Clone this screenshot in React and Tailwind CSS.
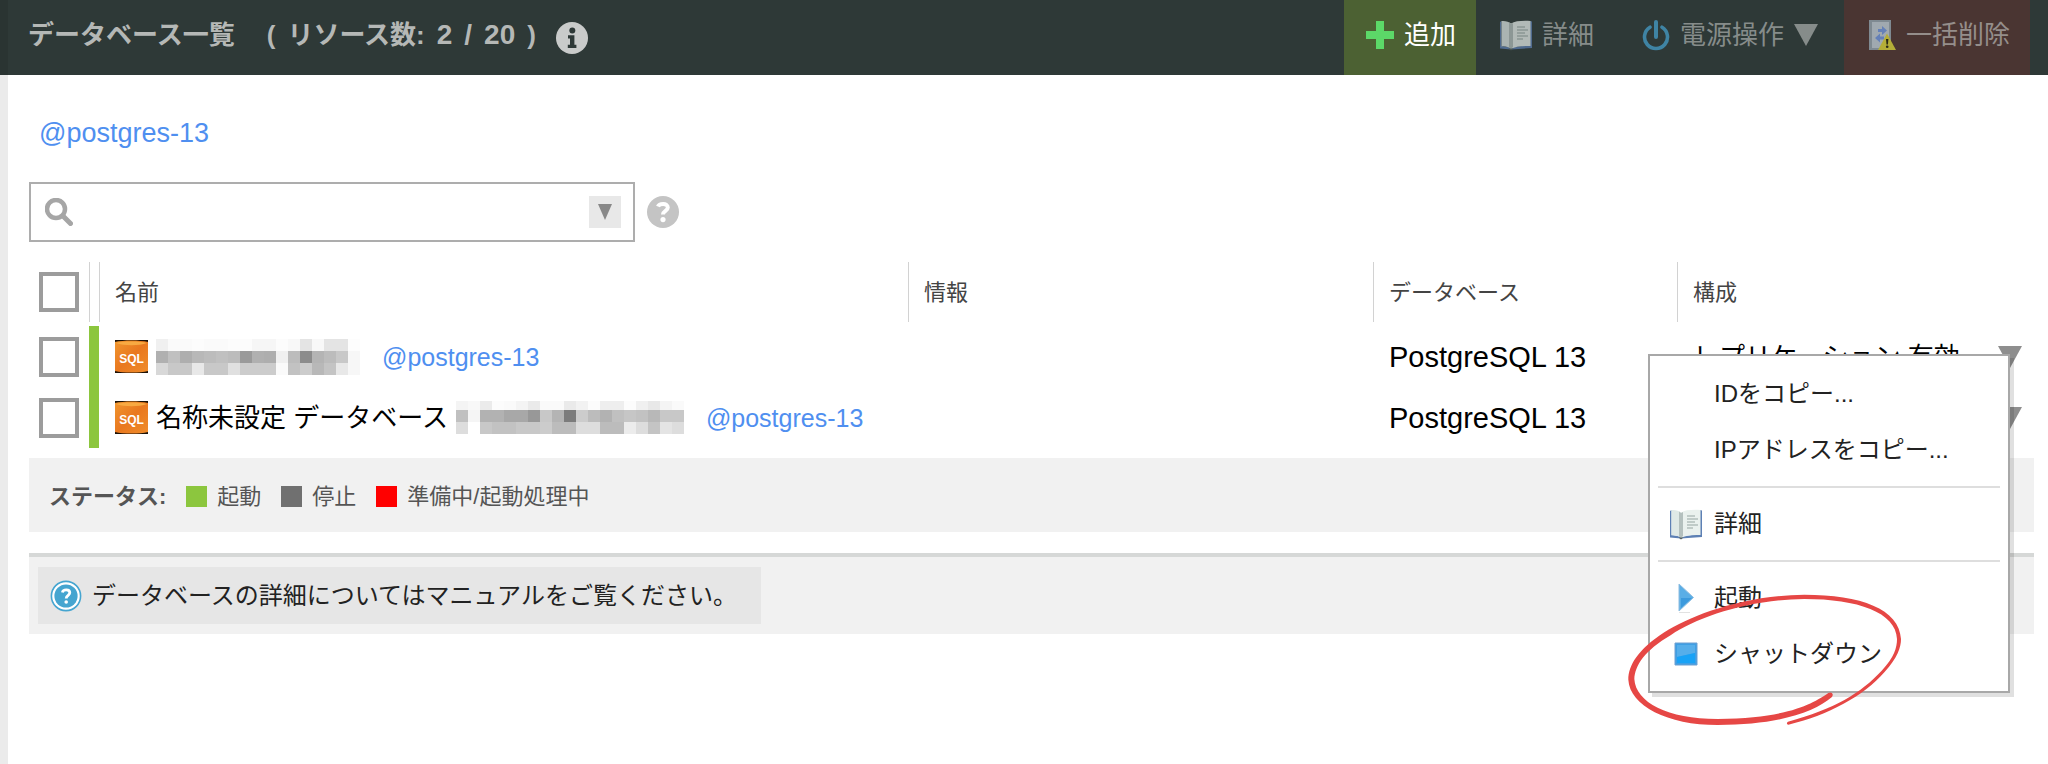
import React, { useState } from "react";

const databases = [
  {
    id: 1,
    name: "",
    mask: {
      top: 12,
      rows: [
        ["f0", "fa", "fa", "fc", "fa", "fa", "fc", "fc", "f6", "f6", "fc", "f8", "e4", "f8", "e4", "e4", "fd"],
        ["b0", "c0", "ae", "b8", "bc", "c0", "bc", "9a", "b0", "ae", "f0", "bc", "8c", "b4", "bc", "c8", "f7"],
        ["d8", "c8", "c8", "e8", "c8", "c8", "e0", "cc", "cc", "cc", "fa", "c2", "cc", "b8", "c4", "e8", "f7"],
      ],
    },
    tag: "@postgres-13",
    database: "PostgreSQL 13",
    config: "レプリケーション 有効",
  },
  {
    id: 2,
    name: "名称未設定 データベース",
    mask: {
      top: 9,
      rows: [
        ["f4", "f8", "eb", "fc", "fa", "f4", "ea", "fa", "fa", "ea", "f2", "fc", "ee", "ee", "fc", "f0", "e8", "f4", "fa"],
        ["c0", "f5", "b2", "b2", "a8", "a8", "98", "c8", "b4", "7c", "cc", "bc", "b2", "c0", "c6", "c2", "b8", "c8", "c8"],
        ["dd", "ff", "c8", "c2", "c2", "c8", "c8", "cc", "bc", "bc", "dd", "dd", "bc", "bc", "ec", "dd", "c4", "e4", "dd"],
      ],
    },
    tag: "@postgres-13",
    database: "PostgreSQL 13",
    config: "レプリケーション 有効",
  },
];

const statuses = [
  { label: "起動", color: "bg-[#8cc63e]" },
  { label: "停止", color: "bg-[#707070]" },
  { label: "準備中/起動処理中", color: "bg-[#ff0000]" },
];

const InfoIcon = () => (
  <svg className="size-8" viewBox="0 0 32 32" aria-hidden="true">
    <circle cx="16" cy="16" r="16" fill="#c9cbca" />
    <circle cx="16.3" cy="8.6" r="3" fill="#2e3937" />
    <path d="M12 13.2h6.4v9.6h2v3.2h-8.6v-3.2h2.2v-6.4h-2z" fill="#2e3937" />
  </svg>
);

const QuestionIcon = () => (
  <svg className="size-8" viewBox="0 0 32 32" aria-hidden="true">
    <circle cx="16" cy="16" r="16" fill="#c4c4c4" />
    <path d="M11 10.5C12 7.6 20.8 6.4 20.8 11.6C20.8 15 16 14.8 16 18.6" fill="none" stroke="#fff" strokeWidth="4" />
    <circle cx="16" cy="23.6" r="2.6" fill="#fff" />
  </svg>
);

const ManualIcon = () => (
  <svg className="size-8" viewBox="0 0 32 32" aria-hidden="true">
    <circle cx="16" cy="16" r="14.6" fill="#fff" stroke="#45a5d0" strokeWidth="1.6" />
    <circle cx="16" cy="16" r="11.6" fill="#45a5d0" />
    <path d="M12.4 12.4C13 9.2 19.8 8.8 19.8 12.8C19.8 15.4 16.2 15.2 16.2 18.4" fill="none" stroke="#fff" strokeWidth="2.8" />
    <circle cx="16.2" cy="22" r="1.8" fill="#fff" />
  </svg>
);

const PlusIcon = () => (
  <svg className="size-7" viewBox="0 0 28 28" aria-hidden="true">
    <path d="M10 0h8v10h10v8H18v10h-8V18H0v-8h10z" fill="#5cd868" />
  </svg>
);

const BookIcon = () => (
  <svg className="size-8" viewBox="0 0 32 32" aria-hidden="true">
    <path d="M0 3L1.5 2v25l9 1.6L30 26V2l2 .6V29l-21 1.6L0 29.4z" fill="#5d80b4" />
    <path d="M1.5 2C5 1.6 9 2.5 11 4.5V30C8.5 27.8 5 27 1.5 27.4z" fill="#dfe9e6" />
    <path d="M11 4.5C15 2 22 1.6 30.5 2v25C22 26.6 15 27.4 11 30z" fill="#eaf1ee" />
    <path d="M9 3.5L11 5v25l-2-1.4zM11 5l2-1V28l-2 2z" fill="#b4c0be" />
    <path d="M8.5 29.5h5L11 31.5z" fill="#54605f" />
    <path d="M17 8h8M17 11h11M17 14h8M17 17h11M17 20h6" stroke="#b3bebc" strokeWidth="1.4" />
  </svg>
);

const PowerIcon = () => (
  <svg className="h-8 w-7" viewBox="0 0 28 32" aria-hidden="true">
    <path d="M8 8.2A11.5 11.5 0 1 0 20 8.2" fill="none" stroke="#3f84a4" strokeWidth="3.6" strokeLinecap="round" />
    <path d="M14 3v15" stroke="#3f84a4" strokeWidth="4" strokeLinecap="round" />
  </svg>
);

const ServerWarningIcon = () => (
  <svg className="h-8 w-7" viewBox="0 0 28 32" aria-hidden="true">
    <path d="M1 1h22v30H1z" fill="#7f8a92" />
    <path d="M4 3h17v26H4z" fill="#a0a9b0" />
    <path d="M10 10h4V7l5 4.5-5 4.5v-3h-4z" fill="#6480b8" />
    <path d="M16 17.5h-4v-3L7 19l5 4.5v-3h4z" fill="#6480b8" />
    <path d="M19 14.5L28 31H10z" fill="#b4ae38" />
    <path d="M18 20h2.4l-.5 5.5h-1.4z" fill="#2b2a18" />
    <circle cx="19.2" cy="27.8" r="1.3" fill="#2b2a18" />
  </svg>
);

const SearchIcon = () => (
  <svg className="size-7" viewBox="0 0 28 28" aria-hidden="true">
    <circle cx="11" cy="11" r="9" fill="none" stroke="#a6a6a6" strokeWidth="4.5" />
    <path d="M18.5 18.5L25.5 25.5" stroke="#a6a6a6" strokeWidth="5" strokeLinecap="round" />
  </svg>
);

const TriangleDown = ({ className }) => (
  <svg className={className} viewBox="0 0 24 22" preserveAspectRatio="none" aria-hidden="true">
    <path d="M0 0h24L12 22z" fill="currentColor" />
  </svg>
);

const SqlIcon = () => (
  <svg className="size-[33px] shrink-0" viewBox="0 0 33 33" aria-hidden="true">
    <defs>
      <linearGradient id="sql" x1="0" x2="1" y1="0" y2="1">
        <stop offset="0" stopColor="#f0962f" />
        <stop offset="0.5" stopColor="#e9781f" />
        <stop offset="1" stopColor="#f08d2b" />
      </linearGradient>
    </defs>
    <path d="M0 0h33v33H0z" fill="#1c1208" />
    <path d="M0 2C8 0 25 0 33 2v29c-8 2-25 2-33 0z" fill="url(#sql)" />
    <path d="M1 3C9 6 24 6 32 3C25 1 8 1 1 3z" fill="#f8aa42" />
    <text x="16.5" y="23" textAnchor="middle" fontSize="12" fontWeight="700" fill="#fff">SQL</text>
  </svg>
);

const PlayIcon = () => (
  <svg className="h-8 w-4" viewBox="0 0 16 32" aria-hidden="true">
    <path d="M1 2L15.5 15.5L1 29z" fill="#5aaee6" stroke="#8fbde0" />
    <path d="M3 16h11L3 26z" fill="#3c9add" />
    <path d="M1 30.5h11" stroke="#e2e2e2" />
  </svg>
);

const StopIcon = () => (
  <svg className="size-6" viewBox="0 0 24 24" aria-hidden="true">
    <path d="M1 1h22v22H1z" fill="#3f9fe4" />
    <path d="M3 3h18v8L3 15z" fill="#56aeea" />
    <path d="M3 15L21 11v10H3z" fill="#18a2f6" />
    <path d="M1 1h22v22H1z" fill="none" stroke="#6f9fd0" />
  </svg>
);

// Hides part of a resource name behind grey blocks
const Mosaic = ({ mask }) => {
  const width = mask.rows[0].length * 12;
  const height = mask.top + 24;
  return (
    <svg width={width} height={height} shapeRendering="crispEdges" aria-hidden="true">
      {mask.rows.map((row, y) =>
        row.map((c, x) => (
          <rect
            key={`${x}-${y}`}
            x={x * 12}
            y={y === 0 ? 0 : mask.top + (y - 1) * 12}
            width="12"
            height={y === 0 ? mask.top : 12}
            fill={`#${c}${c}${c}`}
          />
        ))
      )}
    </svg>
  );
};

const Checkbox = ({ label, checked, onChange }) => (
  <input
    type="checkbox"
    aria-label={label}
    checked={checked}
    onChange={onChange}
    className="block size-10 ml-2.5 appearance-none border-4 border-[#9c9c9c] bg-white checked:bg-[#9c9c9c]"
  />
);

const MenuItem = ({ icon, children }) => (
  <button role="menuitem" className="flex h-14 w-full items-center gap-3 pl-5 text-left hover:bg-gray-100">
    <span className="flex w-8 justify-center">{icon}</span>
    {children}
  </button>
);

const Separator = () => <hr className="mx-2 my-2 h-[2px] border-0 bg-[#dedede]" />;

const ContextMenu = () => (
  <div
    role="menu"
    className="absolute top-7 right-6 z-10 w-[362px] border-2 border-[#a8a8a8] bg-white pt-2.5 pb-[9px] text-2xl text-[#222] shadow-[4px_4px_0_#0000001f]"
  >
    <MenuItem>IDをコピー...</MenuItem>
    <MenuItem>IPアドレスをコピー...</MenuItem>
    <Separator />
    <MenuItem icon={<BookIcon />}>詳細</MenuItem>
    <Separator />
    <MenuItem icon={<PlayIcon />}>起動</MenuItem>
    <MenuItem icon={<StopIcon />}>シャットダウン</MenuItem>

    {/* Hand drawn marker round the shutdown item */}
    <svg
      className="pointer-events-none absolute -bottom-9 -left-6 h-[136px] w-[280px]"
      viewBox="75 456 840 408"
      aria-hidden="true"
    >
      <path
        d="M562 857C680 830 790 770 850 700C890 655 900 625 900 600C895 510 780 467 610 467C420 470 270 530 190 580C110 632 82 680 82 722C86 800 200 858 350 858C530 858 640 820 692 775C700 766 692 756 682 762C640 790 570 838 350 840C200 840 104 790 100 720C102 680 130 635 210 588C290 535 440 482 610 480C770 480 885 520 888 600C888 625 880 655 842 695C780 762 700 810 561 848C556 851 557 856 562 857Z"
        fill="#e64745"
      />
    </svg>
  </div>
);

const App = () => {
  const [selected, setSelected] = useState([]);
  const [query, setQuery] = useState("");

  const allSelected = selected.length === databases.length;

  const toggle = (id) => {
    setSelected(selected.includes(id) ? selected.filter((s) => s !== id) : [...selected, id]);
  };

  const toggleAll = () => {
    setSelected(allSelected ? [] : databases.map((d) => d.id));
  };

  return (
    <div className="flex min-h-screen flex-col bg-white font-['Liberation_Sans','Noto_Sans_CJK_JP',sans-serif] text-black">
      <header className="flex h-[75px] items-stretch justify-between border-l-8 border-[#2a3432] bg-[#2e3937] pr-[18px] text-[26px] leading-8 text-[#868c8a]">
        <div className="flex items-center gap-5 pl-5 text-[#b5b8b6]">
          <h1 className="flex gap-8 pb-1.5 font-bold">
            データベース一覧
            <span className="flex gap-3">
              <span>(</span>
              <span>リソース数:</span>
              <span className="text-[28px]">2</span>
              <span className="text-[28px]">/</span>
              <span className="text-[28px]">20</span>
              <span>)</span>
            </span>
          </h1>
          <button aria-label="情報">
            <InfoIcon />
          </button>
        </div>

        {/* Toolbar */}
        <div className="flex items-stretch">
          <button className="flex items-center gap-2.5 bg-[#4c6133] pr-5 pb-1.5 pl-[22px] text-white">
            <PlusIcon /> 追加
          </button>
          <button className="flex items-center gap-2.5 px-6 pb-1.5">
            <span className="opacity-70"><BookIcon /></span> 詳細
          </button>
          <button className="flex items-center gap-2.5 pr-[26px] pb-1.5 pl-6">
            <PowerIcon /> 電源操作
            <TriangleDown className="h-[22px] w-6" />
          </button>
          <button className="flex items-center gap-2.5 bg-[#4a3532] pr-5 pb-1.5 pl-6 text-[#958e8b]">
            <ServerWarningIcon /> 一括削除
          </button>
        </div>
      </header>

      <main className="grow border-l-8 border-[#ebebeb] pr-3.5 pl-[21px]">
        <p className="pt-10 pl-2.5 text-[27px] leading-9">
          <a href="#postgres-13" className="text-[#4f8ff0]">@postgres-13</a>
        </p>

        {/* Search */}
        <div className="mt-[31px] flex items-center gap-3">
          <div className="flex h-[60px] w-[606px] items-center gap-3 border-2 border-[#adadad] pr-3 pl-3.5">
            <SearchIcon />
            <input
              type="text"
              aria-label="検索"
              value={query}
              onChange={(e) => setQuery(e.target.value)}
              className="h-10 min-w-0 grow text-2xl outline-none"
            />
            <button aria-label="検索条件" className="flex size-8 items-center justify-center bg-[#e8e8e8] text-[#888]">
              <TriangleDown className="h-4 w-3.5" />
            </button>
          </div>
          <button aria-label="ヘルプ">
            <QuestionIcon />
          </button>
        </div>

        <table className="mt-5 w-full table-fixed border-collapse text-left">
          <colgroup>
            <col className="w-[60px]" />
            <col className="w-2.5" />
            <col />
            <col className="w-[465px]" />
            <col className="w-[304px]" />
            <col className="w-[357px]" />
          </colgroup>
          <thead className="text-[22px] text-[#444]">
            <tr className="h-16">
              <th className="p-0 pb-1">
                <Checkbox label="すべて選択" checked={allSelected} onChange={toggleAll} />
              </th>
              <th className="p-0 pb-1">
                <div className="h-[60px] border-l border-[#d2d2d2]" />
              </th>
              {["名前", "情報", "データベース", "構成"].map((label) => (
                <th key={label} scope="col" className="p-0 pb-1 font-normal">
                  <div className="flex h-[60px] items-center border-l border-[#d2d2d2] pl-[15px]">{label}</div>
                </th>
              ))}
            </tr>
          </thead>
          <tbody className="text-[26px] leading-9 whitespace-nowrap">
            {databases.map((db, i) => (
              <tr key={db.id} className="h-[61px]">
                <td className="p-0">
                  <Checkbox label={`選択 ${db.id}`} checked={selected.includes(db.id)} onChange={() => toggle(db.id)} />
                </td>
                <td className="bg-[#8cc63e] p-0" />
                <td className="p-0 pl-4">
                  <div className="flex items-center gap-2">
                    <SqlIcon />
                    {db.name && <span>{db.name}</span>}
                    <Mosaic mask={db.mask} />
                    <a href="#postgres-13" className="ml-3.5 text-[25px] text-[#4f8ff0]">{db.tag}</a>
                  </div>
                </td>
                <td className="p-0 pl-4" />
                <td className="p-0 pl-4 text-[29px]">{db.database}</td>
                <td className="relative p-0 pr-3 pl-4">
                  <div className="flex items-center justify-between">
                    {db.config}
                    <button aria-label="メニュー" className="text-[#8e8e8e]">
                      <TriangleDown className="h-[22px] w-6" />
                    </button>
                  </div>
                  {i === 0 && <ContextMenu />}
                </td>
              </tr>
            ))}
          </tbody>
        </table>

        {/* Status legend */}
        <div className="mt-2.5 flex h-[74px] items-center gap-5 bg-[#f1f1f1] pt-0.5 pl-5 text-[22px] text-[#555]">
          <span className="font-bold">ステータス:</span>
          {statuses.map((s) => (
            <span key={s.label} className="flex items-center gap-2.5">
              <span className={`size-[21px] ${s.color}`} />
              {s.label}
            </span>
          ))}
        </div>

        <div className="mt-[21px] flex border-t-4 border-[#d6d8d7] bg-[#f1f1f1] px-[9px] py-2.5">
          <a href="#manual" className="flex h-[57px] items-center gap-2.5 bg-[#e6e6e6] pr-6 pl-3 text-2xl text-[#222]">
            <ManualIcon />
            データベースの詳細についてはマニュアルをご覧ください。
          </a>
        </div>
      </main>
    </div>
  );
};

export default App;
